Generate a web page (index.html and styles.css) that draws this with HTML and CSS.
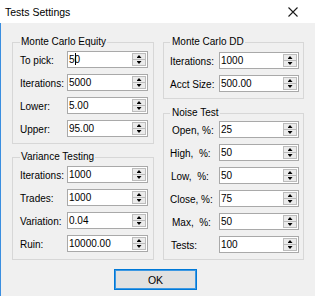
FILE: index.html
```html
<!DOCTYPE html>
<html>
<head>
<meta charset="utf-8">
<link rel="stylesheet" href="styles.css">
</head>
<body>
<div class="window">
  <div class="titlebar">
    <span class="title">Tests Settings</span>
    <svg class="close" width="10" height="10" viewBox="0 0 10 10"><path d="M0.5 0.5 L9.5 9.5 M9.5 0.5 L0.5 9.5" stroke="#1a1a1a" stroke-width="1.1" fill="none"/></svg>
  </div>
  <div class="content">
    <div class="columns">
      <div class="col col-left">
        <fieldset class="group g-equity">
          <legend>Monte Carlo Equity</legend>
          <div class="row"><span class="lbl">To pick:</span><div class="field"><span class="val">5<i class="caret"></i>0</span><div class="spin"><b class="up"><i></i></b><b class="dn"><i></i></b></div></div></div>
          <div class="row"><span class="lbl">Iterations:</span><div class="field"><span class="val">5000</span><div class="spin"><b class="up"><i></i></b><b class="dn"><i></i></b></div></div></div>
          <div class="row"><span class="lbl">Lower:</span><div class="field"><span class="val">5.00</span><div class="spin"><b class="up"><i></i></b><b class="dn"><i></i></b></div></div></div>
          <div class="row"><span class="lbl">Upper:</span><div class="field"><span class="val">95.00</span><div class="spin"><b class="up"><i></i></b><b class="dn"><i></i></b></div></div></div>
        </fieldset>
        <fieldset class="group g-variance">
          <legend>Variance Testing</legend>
          <div class="row"><span class="lbl">Iterations:</span><div class="field"><span class="val">1000</span><div class="spin"><b class="up"><i></i></b><b class="dn"><i></i></b></div></div></div>
          <div class="row"><span class="lbl">Trades:</span><div class="field"><span class="val">1000</span><div class="spin"><b class="up"><i></i></b><b class="dn"><i></i></b></div></div></div>
          <div class="row"><span class="lbl">Variation:</span><div class="field"><span class="val">0.04</span><div class="spin"><b class="up"><i></i></b><b class="dn"><i></i></b></div></div></div>
          <div class="row"><span class="lbl">Ruin:</span><div class="field"><span class="val">10000.00</span><div class="spin"><b class="up"><i></i></b><b class="dn"><i></i></b></div></div></div>
        </fieldset>
      </div>
      <div class="col col-right">
        <fieldset class="group g-dd">
          <legend>Monte Carlo DD</legend>
          <div class="row"><span class="lbl">Iterations:</span><div class="field"><span class="val">1000</span><div class="spin"><b class="up"><i></i></b><b class="dn"><i></i></b></div></div></div>
          <div class="row"><span class="lbl">Acct Size:</span><div class="field"><span class="val">500.00</span><div class="spin"><b class="up"><i></i></b><b class="dn"><i></i></b></div></div></div>
        </fieldset>
        <fieldset class="group g-noise">
          <legend>Noise Test</legend>
          <div class="row"><span class="lbl ind2">Open, %:</span><div class="field"><span class="val">25</span><div class="spin"><b class="up"><i></i></b><b class="dn"><i></i></b></div></div></div>
          <div class="row"><span class="lbl">High,&nbsp; %:</span><div class="field"><span class="val">50</span><div class="spin"><b class="up"><i></i></b><b class="dn"><i></i></b></div></div></div>
          <div class="row"><span class="lbl ind1">Low,&nbsp; %:</span><div class="field"><span class="val">50</span><div class="spin"><b class="up"><i></i></b><b class="dn"><i></i></b></div></div></div>
          <div class="row"><span class="lbl">Close, %:</span><div class="field"><span class="val">75</span><div class="spin"><b class="up"><i></i></b><b class="dn"><i></i></b></div></div></div>
          <div class="row"><span class="lbl ind2">Max,&nbsp; %:</span><div class="field"><span class="val">50</span><div class="spin"><b class="up"><i></i></b><b class="dn"><i></i></b></div></div></div>
          <div class="row"><span class="lbl ind1">Tests:</span><div class="field"><span class="val">100</span><div class="spin"><b class="up"><i></i></b><b class="dn"><i></i></b></div></div></div>
        </fieldset>
      </div>
    </div>
    <div class="actions">
      <button class="btn">OK</button>
    </div>
  </div>
</div>
</body>
</html>
```

FILE: styles.css
```css
* { box-sizing: border-box; }
html, body {
  margin: 0;
  padding: 0;
  width: 315px;
  height: 296px;
  overflow: hidden;
  background: #f0f0f0;
  font-family: "Liberation Sans", Arial, sans-serif;
  color: #000;
}
.window {
  display: flex;
  flex-direction: column;
  width: 315px;
  height: 296px;
}
.titlebar {
  height: 23px;
  flex: 0 0 23px;
  background: #fff;
  display: flex;
  align-items: center;
  justify-content: space-between;
  padding: 0 17px 0 5px;
}
.title {
  font-size: 10.5px;
  line-height: 12px;
  color: #000;
  padding-top: 1px;
}
.close { display: block; }
.content {
  flex: 1;
  border-left: 1px solid #3a8ee0;
  padding: 13px 0 0 11px;
}
.columns {
  display: grid;
  grid-template-columns: 142px 141px;
  column-gap: 9px;
}
.col {
  display: flex;
  flex-direction: column;
}
.col-left { gap: 7px; }
.col-right { gap: 8px; }
.group {
  margin: 0;
  min-width: 0;
  border: 1px solid #d7d7d7;
  display: flex;
  flex-direction: column;
  gap: 6px;
}
.group legend {
  font-size: 10px;
  line-height: 12px;
  padding: 0 1px;
}
.col-left .group { padding-left: 7px; padding-right: 5px; }
.col-right .group { padding-left: 6px; padding-right: 4px; }
.col-right .group legend { padding-left: 2px; }
.g-equity { padding-top: 3px; padding-bottom: 6px; }
.g-variance { padding-top: 3px; padding-bottom: 7px; flex: 1; }
.g-dd { padding-top: 4px; padding-bottom: 6px; }
.g-noise { padding-top: 2px; padding-bottom: 6px; flex: 1; }
.row {
  display: flex;
  align-items: center;
  height: 17px;
}
.lbl {
  font-size: 10px;
  white-space: nowrap;
  padding-top: 1px;
}
.col-left .lbl { flex: 0 0 47px; }
.col-right .lbl { flex: 0 0 49px; }
.ind1 { padding-left: 1px; }
.ind2 { padding-left: 2px; }
.field {
  flex: 1;
  height: 17px;
  display: flex;
  align-items: stretch;
  background: #fff;
  border: 1px solid #a9a9a9;
}
.val {
  flex: 1;
  font-size: 10px;
  line-height: 15px;
  padding-left: 1px;
  white-space: nowrap;
}
.caret {
  display: inline-block;
  width: 1px;
  height: 12px;
  background: #000;
  vertical-align: -2px;
  margin-right: -1px;
}
.spin {
  flex: 0 0 14px;
  margin: 1px 1px 1px 0;
  display: flex;
  flex-direction: column;
  border: 1px solid #bcbcbc;
  background: #ebebeb;
}
.spin b {
  flex: 1;
  display: flex;
  align-items: center;
  justify-content: center;
}
.spin b.up { border-bottom: 1px solid #bcbcbc; }
.spin i {
  display: block;
  width: 5px;
  height: 3px;
  background: #000;
}
.spin .up i { clip-path: polygon(50% 0, 100% 100%, 0 100%); }
.spin .dn i { clip-path: polygon(0 0, 100% 0, 50% 100%); }
.actions {
  display: flex;
  margin-top: 9px;
  padding-left: 102px;
}
.btn {
  width: 83px;
  height: 21px;
  margin: 0;
  padding: 0;
  background: #e1e1e1;
  border: 1px solid #0078d7;
  box-shadow: inset 0 0 0 1px #3d98e2;
  font-family: "Liberation Sans", Arial, sans-serif;
  font-size: 10.5px;
  color: #000;
}
```
